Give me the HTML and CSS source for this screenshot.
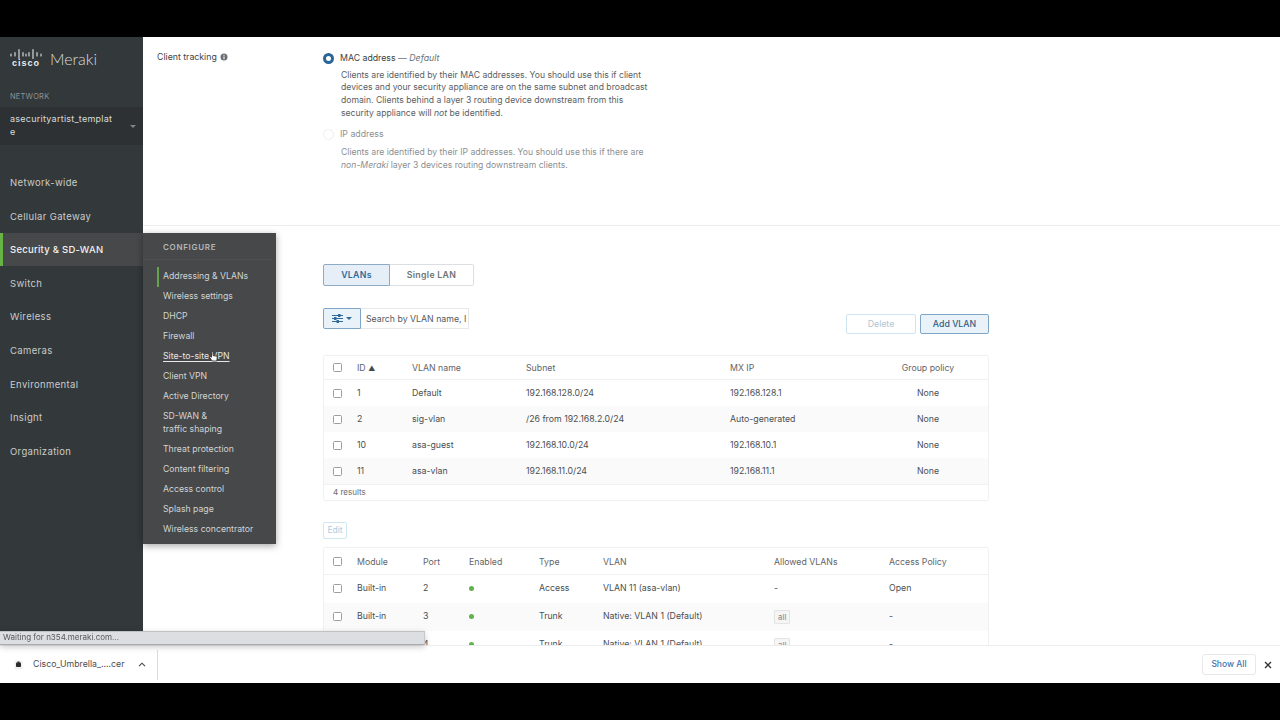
FILE: index.html
```html
<!DOCTYPE html>
<html lang="en">
<head>
<meta charset="utf-8">
<title>Addressing &amp; VLANs - Meraki</title>
<link rel="stylesheet" href="styles.css">
</head>
<body>
<div class="app">
  <div class="workspace">
    <aside class="sidebar">
      <div class="logo">
        <div class="cisco">
          <svg class="cisco-bars" width="32" height="12" viewBox="0 0 32 12" aria-hidden="true">
            <g stroke="#e4e6e6" stroke-width="1.1" stroke-linecap="round">
              <path d="M1 6v2M5 4.500v3.500M9 1.500v9M13 4.500v3.500M16 6v2M19 4.500v3.500M23 1.500v9M27 4.500v3.500M31 6v2"/>
            </g>
          </svg>
          <span class="cisco-word">cisco</span>
        </div>
        <span class="meraki-word">Meraki</span>
      </div>
      <div class="network-label">NETWORK</div>
      <div class="network-select">
        <span class="network-name">asecurityartist_templat<br>e</span>
        <span class="select-caret"></span>
      </div>
      <nav class="nav">
        <a class="nav-item">Network-wide</a>
        <a class="nav-item">Cellular Gateway</a>
        <a class="nav-item nav-active">Security &amp; SD-WAN</a>
        <a class="nav-item">Switch</a>
        <a class="nav-item">Wireless</a>
        <a class="nav-item">Cameras</a>
        <a class="nav-item">Environmental</a>
        <a class="nav-item">Insight</a>
        <a class="nav-item">Organization</a>
      </nav>
    </aside>

    <main class="main">
      <section class="tracking">
        <div class="tracking-label">Client tracking <svg class="info" width="8" height="8" viewBox="0 0 8 8" aria-hidden="true"><circle cx="4" cy="4" r="3.500" fill="#6b7074"/><rect x="3.500" y="3.400" width="1" height="2.800" fill="#fff"/><rect x="3.500" y="1.800" width="1" height="1" fill="#fff"/></svg></div>
        <div class="tracking-options">
          <div class="radio-line"><span class="radio radio-on"></span><span class="radio-text">MAC address <span class="dash">— <em>Default</em></span></span></div>
          <p class="radio-help">Clients are identified by their MAC addresses. You should use this if client devices and your security appliance are on the same subnet and broadcast domain. Clients behind a layer 3 routing device downstream from this security appliance will <em>not</em> be identified.</p>
          <div class="radio-line radio-second"><span class="radio radio-off"></span><span class="radio-text muted">IP address</span></div>
          <p class="radio-help muted">Clients are identified by their IP addresses. You should use this if there are <em>non-Meraki</em> layer 3 devices routing downstream clients.</p>
        </div>
      </section>

      <section class="vlans">
        <div class="tabs">
          <span class="tab tab-on">VLANs</span>
          <span class="tab">Single LAN</span>
        </div>
        <div class="toolbar">
          <div class="search">
            <span class="filter-btn">
              <svg width="11" height="9" viewBox="0 0 11 9" aria-hidden="true"><g stroke="#2f6a9a" stroke-width="1" fill="#2f6a9a"><path d="M0 1.500h11M0 4.500h11M0 7.500h11"/><rect x="6.500" y="0.500" width="1.500" height="2"/><rect x="2.500" y="3.500" width="1.500" height="2"/><rect x="5" y="6.500" width="1.500" height="2"/></g></svg>
              <span class="filter-caret"></span>
            </span>
            <span class="search-input">Search by VLAN name, I</span>
          </div>
          <div class="actions">
            <span class="btn btn-disabled">Delete</span>
            <span class="btn btn-primary">Add VLAN</span>
          </div>
        </div>

        <div class="table table-vlan">
          <div class="row head"><span class="check check-head"></span><span>ID <span class="sort">▲</span></span><span>VLAN name</span><span>Subnet</span><span>MX IP</span><span class="center">Group policy</span></div>
          <div class="row"><span class="check"></span><span>1</span><span>Default</span><span>192.168.128.0/24</span><span>192.168.128.1</span><span class="center">None</span></div>
          <div class="row zebra"><span class="check"></span><span>2</span><span>sig-vlan</span><span>/26 from 192.168.2.0/24</span><span>Auto-generated</span><span class="center">None</span></div>
          <div class="row"><span class="check"></span><span>10</span><span>asa-guest</span><span>192.168.10.0/24</span><span>192.168.10.1</span><span class="center">None</span></div>
          <div class="row zebra"><span class="check"></span><span>11</span><span>asa-vlan</span><span>192.168.11.0/24</span><span>192.168.11.1</span><span class="center">None</span></div>
          <div class="results">4 results</div>
        </div>

        <span class="btn btn-edit">Edit</span>

        <div class="table table-ports">
          <div class="row head"><span class="check check-head"></span><span>Module</span><span>Port</span><span>Enabled</span><span>Type</span><span>VLAN</span><span>Allowed VLANs</span><span>Access Policy</span></div>
          <div class="row"><span class="check"></span><span>Built-in</span><span>2</span><span><i class="dot"></i></span><span>Access</span><span>VLAN 11 (asa-vlan)</span><span>-</span><span>Open</span></div>
          <div class="row zebra"><span class="check"></span><span>Built-in</span><span>3</span><span><i class="dot"></i></span><span>Trunk</span><span>Native: VLAN 1 (Default)</span><span><b class="tag">all</b></span><span>-</span></div>
          <div class="row"><span class="check"></span><span>Built-in</span><span>4</span><span><i class="dot"></i></span><span>Trunk</span><span>Native: VLAN 1 (Default)</span><span><b class="tag">all</b></span><span>-</span></div>
        </div>
      </section>
    </main>
  </div>

  <footer class="downloads">
    <div class="download">
      <svg class="file-icon" width="9" height="10" viewBox="0 0 9 10" aria-hidden="true"><rect x="0.500" y="0.500" width="8" height="9" rx="1" fill="#f2f2f2"/><rect x="2" y="2.500" width="5" height="4.500" rx="0.800" fill="#2c2c2c"/><rect x="3.500" y="1.500" width="2" height="1.500" fill="#2c2c2c"/></svg>
      <span class="file-name">Cisco_Umbrella_....cer</span>
      <svg width="8" height="5" viewBox="0 0 8 5" aria-hidden="true"><path d="M1 4.200L4 1.200L7 4.200" fill="none" stroke="#444" stroke-width="1.100"/></svg>
    </div>
    <div class="downloads-end">
      <span class="show-all">Show All</span>
      <svg width="8" height="8" viewBox="0 0 8 8" aria-hidden="true"><path d="M1 1L7 7M7 1L1 7" stroke="#333" stroke-width="1.400"/></svg>
    </div>
  </footer>

  <div class="flyout">
    <div class="flyout-title">CONFIGURE</div>
    <ul class="flyout-list">
      <li class="fly-active">Addressing &amp; VLANs</li>
      <li>Wireless settings</li>
      <li>DHCP</li>
      <li>Firewall</li>
      <li class="fly-hover">Site-to-site VPN</li>
      <li>Client VPN</li>
      <li>Active Directory</li>
      <li>SD-WAN &amp;<br>traffic shaping</li>
      <li>Threat protection</li>
      <li>Content filtering</li>
      <li>Access control</li>
      <li>Splash page</li>
      <li>Wireless concentrator</li>
    </ul>
  </div>

  <svg class="cursor" width="9" height="11" viewBox="0 0 9 11" aria-hidden="true"><path d="M2.500 1.200c0-.9 1.500-.9 1.500 0V4.500l3 .6c1 .2 1.300.8 1.200 1.600L7.800 10H3.200L.8 6.600c-.5-.8.500-1.500 1.200-.8l.5.5z" fill="#fff" stroke="#222" stroke-width="0.800"/></svg>

  <div class="status">Waiting for n354.meraki.com...</div>
</div>
</body>
</html>
```
FILE: styles.css
```css
* { box-sizing: border-box; }
html, body { margin: 0; height: 100%; }
body {
  background: #000;
  padding-top: 37px;
  overflow: hidden;
  font-family: Inter, "Liberation Sans", sans-serif;
  font-size: 8.750px;
  line-height: 13px;
  color: #4a4f53;
}
.app {
  position: relative;
  width: 1280px;
  height: 646px;
  display: flex;
  flex-direction: column;
  background: #fff;
  filter: blur(.3px);
}
.workspace { flex: 0 0 608px; display: flex; overflow: hidden; }

/* sidebar */
.sidebar { flex: 0 0 143px; background: #33383a; color: #d5d8d8; }
.logo { display: flex; align-items: flex-start; gap: 8px; padding: 11px 0 0 10px; height: 52px; }
.cisco { display: flex; flex-direction: column; align-items: center; width: 32px; }
.cisco-bars { display: block; }
.cisco-word { font: 700 9px/7px "Liberation Sans", sans-serif; letter-spacing: 1px; color: #eceeee; }
.meraki-word { font-family: Lato, sans-serif; font-weight: 300; font-size: 16px; line-height: 20px; color: #d9dcdc; margin-top: 1px; }
.network-label { font-size: 7.500px; line-height: 10px; letter-spacing: .2px; color: #8d9294; padding: 3px 0 0 10px; height: 18px; }
.network-select { height: 38px; background: #2e3133; padding: 6px 0 0 10px; display: flex; position: relative; }
.network-name { font-size: 9px; line-height: 12.500px; letter-spacing: .25px; color: #d9dcdc; }
.select-caret { position: absolute; right: 7px; top: 18px; border: 3px solid transparent; border-top-color: #7f8486; border-bottom: 0; }
.nav { padding-top: 20.700px; display: flex; flex-direction: column; }
.nav-item { height: 33.600px; padding-left: 10px; display: flex; align-items: center; font-size: 9.500px; letter-spacing: .35px; color: #c9cccc; }
.nav-active { background: #464849; color: #f0f1f1; font-weight: 500; letter-spacing: .25px; border-left: 3px solid #67b346; padding-left: 7px; }

/* flyout */
.flyout {
  position: absolute;
  left: 143px;
  top: 196px;
  width: 133px;
  height: 311px;
  background: #464849;
  box-shadow: 0 2px 7px rgba(0, 0, 0, .35);
  color: #d2d4d4;
}
.flyout-title { height: 27px; margin-right: 4px; padding: 8px 0 0 20px; border-bottom: 1px solid #4f5152; font-size: 8px; font-weight: 600; letter-spacing: .7px; color: #b4b7b7; }
.flyout-list { list-style: none; margin: 0; padding: 6.500px 0 0; }
.flyout-list li { padding: 3.750px 0 3.750px 20px; font-size: 8.700px; line-height: 12.500px; position: relative; }
.flyout-list li.fly-active::before { content: ""; position: absolute; left: 14px; top: 0; width: 2px; height: 20px; background: #67a34a; }
.flyout-list li.fly-hover { text-decoration: underline; text-underline-offset: 2px; color: #e6e7e7; }
.cursor { position: absolute; left: 209px; top: 314px; }

/* main */
.main { flex: 1; overflow: hidden; }
.tracking { height: 189px; display: flex; border-bottom: 1px solid #ececec; padding: 14px 0 0 14px; }
.tracking-label { flex: 0 0 166px; color: #3f4447; }
.info { vertical-align: -1px; margin-left: 1px; }
.tracking-options { width: 330px; padding-top: 1px; }
.radio-line { display: flex; align-items: center; height: 13px; }
.radio { width: 11px; height: 11px; border-radius: 50%; margin-right: 6px; flex: none; }
.radio-on { border: 3px solid #2a6597; background: #fff; }
.radio-off { border: 1px solid #eeeeee; }
.radio-text { color: #3a3f42; }
.dash { color: #6e7276; }
.radio-help { margin: 3.500px 0 0 18px; width: 312px; font-size: 8.650px; line-height: 12.700px; color: #5b6064; }
.radio-second { margin-top: 9px; }
.muted { color: #8b8f92; }
.radio-help.muted { margin-top: 5px; }

.vlans { padding: 38px 0 0 180px; }
.tabs { display: flex; height: 22px; width: 151px; }
.tab { flex: 1; display: flex; align-items: center; justify-content: center; border: 1px solid #dcdfe2; border-left: 0; border-radius: 0 2px 2px 0; font-weight: 600; letter-spacing: .3px; color: #6e7478; }
.tab-on { flex: 0 0 67px; background: #e6eff8; border: 1px solid #8fabc4; border-radius: 2px 0 0 2px; color: #2f6a9a; }
.toolbar { margin-top: 22px; width: 666px; height: 47px; display: flex; justify-content: space-between; }
.search { display: flex; height: 21px; }
.filter-btn { width: 38px; display: flex; align-items: center; justify-content: center; gap: 3px; background: #eaf2f9; border: 1px solid #7fa6c6; border-radius: 2px 0 0 2px; }
.filter-caret { border: 3px solid transparent; border-top-color: #2f6a9a; border-bottom: 0; }
.search-input { width: 108px; padding: 1px 0 0 5px; line-height: 18px; border: 1px solid #e6e8ea; border-left: 0; color: #55595d; white-space: nowrap; overflow: hidden; }
.actions { display: flex; gap: 4px; padding-top: 6px; height: 26px; }
.btn { display: flex; align-items: center; justify-content: center; height: 20px; border-radius: 2px; }
.btn-disabled { width: 70px; border: 1px solid #cfe4f0; color: #b3c4d0; }
.btn-primary { width: 69px; border: 1px solid #7fa6c6; background: #eaf2f9; color: #2f5f88; font-weight: 500; }
.btn-edit { margin-top: 21px; width: 24px; height: 17px; border: 1px solid #cfe6f3; color: #a9cde0; font-size: 8.500px; }

.table { width: 666px; border: 1px solid #f1f1f1; border-radius: 2px; }
.table-ports { margin-top: 8px; }
.row { display: grid; align-items: center; padding-left: 8.500px; }
.table-vlan .row { height: 26px; grid-template-columns: 24.500px 55px 114px 204px 137px 122px; }
.table-vlan .head { height: 24px; padding-top: 1px; }
.table-ports .row { height: 28px; grid-template-columns: 24.500px 66px 46px 70px 64px 171px 115px 100px; }
.table-ports .head { height: 26.500px; padding-top: 3px; }
.head { color: #5f6468; border-bottom: 1px solid #f1f1f1; }
.zebra { background: #fafafa; }
.center { text-align: center; }
.sort { font-size: 7px; color: #44484b; }
.check { width: 9px; height: 9px; border: 1px solid #9a9ea1; border-radius: 1.500px; background: #fff; }
.check-head { margin-top: -2px; }
.results { height: 16px; padding: 1px 0 0 9px; border-top: 1px solid #f1f1f1; font-size: 8px; line-height: 13px; color: #666b6f; }
.dot { display: block; width: 5px; height: 5px; border-radius: 50%; background: #62b14a; }
.tag { font-weight: 400; font-size: 8px; display: inline-block; padding: 0 3px; line-height: 12px; background: #f5f5f5; border: 1px solid #e4e4e4; border-radius: 1px; color: #888; }

/* status bubble */
.status {
  position: absolute;
  left: 0;
  top: 594px;
  width: 425px;
  height: 14px;
  padding-left: 3px;
  background: #dcdee1;
  border-top: 1px solid #bfc1c4;
  border-bottom: 1px solid #a8aaad;
  border-right: 1px solid #c6c8ca;
  box-shadow: 0 2px 6px rgba(0, 0, 0, .22);
  font-size: 8px;
  line-height: 11px;
  color: #55595c;
}

/* downloads */
.downloads { flex: 1; display: flex; align-items: center; justify-content: space-between; border-top: 1px solid #ededed; background: #fff; }
.download { width: 158px; height: 30px; padding-left: 14px; display: flex; align-items: center; border-right: 1px solid #dcdcdc; }
.file-name { margin: 0 8px 0 10px; color: #4a4d50; width: 97px; white-space: nowrap; }
.downloads-end { display: flex; align-items: center; gap: 8px; padding-right: 8px; }
.show-all { display: flex; align-items: center; justify-content: center; width: 54px; height: 21px; border: 1px solid #e8e8e8; border-radius: 3px; font-size: 8.500px; color: #3f74b0; font-weight: 500; }
```
